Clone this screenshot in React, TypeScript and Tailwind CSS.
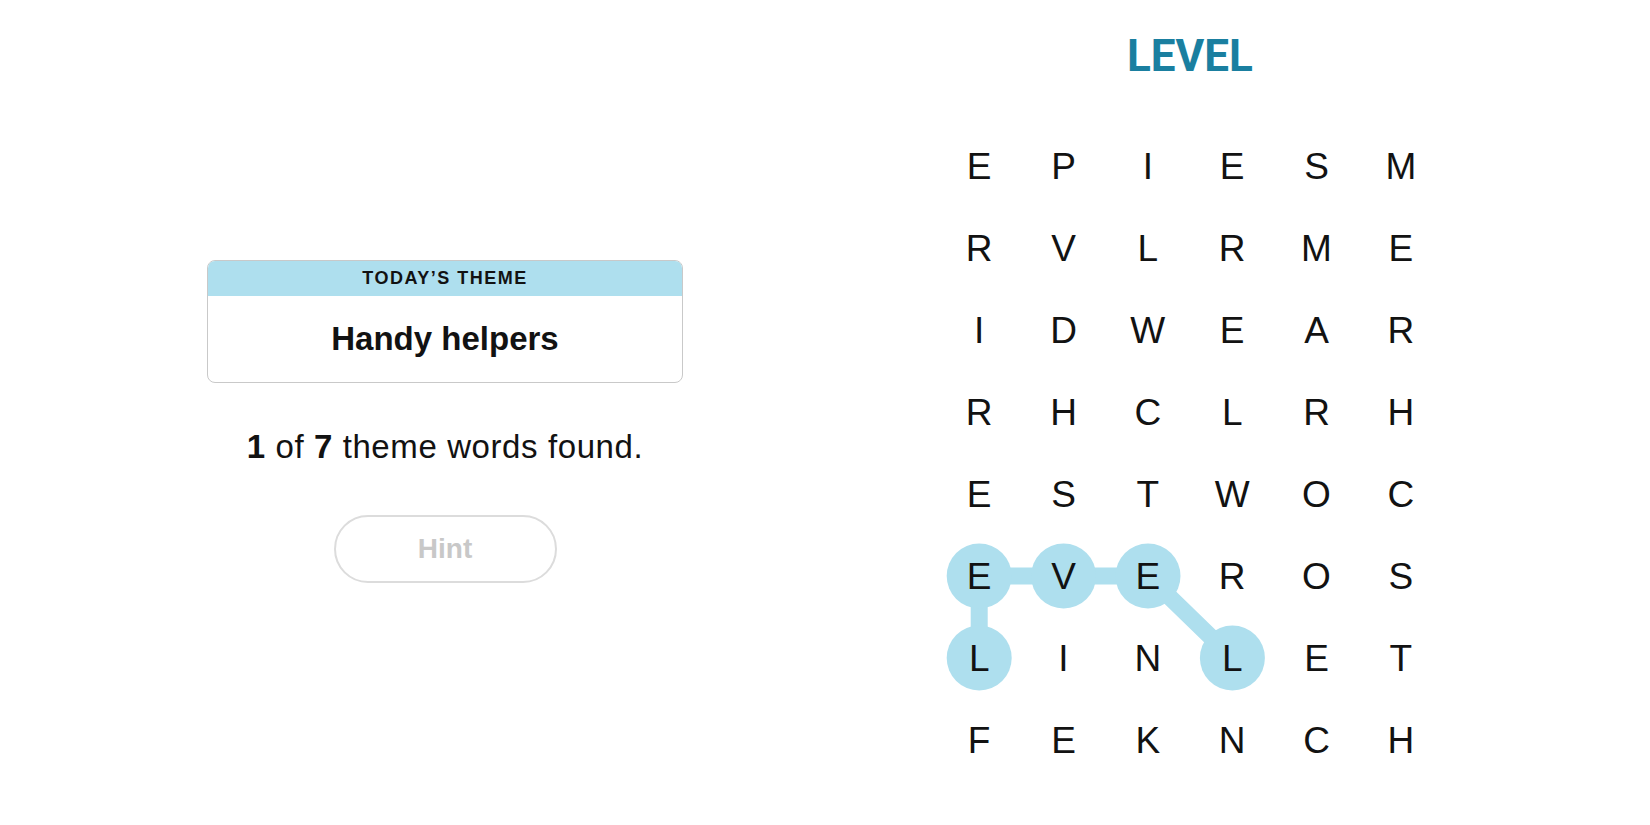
import React from "react";

const GRID = [
  "EPIESM",
  "RVLRME",
  "IDWEAR",
  "RHCLRH",
  "ESTWOC",
  "EVEROS",
  "LINLET",
  "FEKNCH",
];

const CW = 84.4;
const CH = 82;
const path: [number, number][] = [
  [0, 6],
  [0, 5],
  [1, 5],
  [2, 5],
  [3, 6],
];

function Board() {
  const pts = path.map(([c, r]) => `${CW / 2 + c * CW},${CH / 2 + r * CH}`).join(" ");
  return (
    <div className="relative w-[506px] h-[656px]">
      <svg className="absolute inset-0" width="506" height="656" viewBox="0 0 506 656">
        <polyline
          points={pts}
          fill="none"
          stroke="#aedfee"
          strokeWidth="17"
          strokeLinejoin="round"
        />
        {path.map(([c, r]) => (
          <circle key={`${c}-${r}`} cx={CW / 2 + c * CW} cy={CH / 2 + r * CH} r="32.5" fill="#aedfee" />
        ))}
      </svg>
      <div className="relative grid grid-cols-6">
        {GRID.map((row, r) =>
          row.split("").map((ch, c) => (
            <div
              key={`${c}-${r}`}
              className="h-[82px] flex items-center justify-center text-[37px] leading-none text-[#121212]"
            >
              {ch}
            </div>
          ))
        )}
      </div>
    </div>
  );
}

export default function App() {
  return (
    <div
      className="w-[1650px] h-[825px] bg-white flex justify-between px-[207px] overflow-hidden"
      style={{ fontFamily: '"Liberation Sans", Arial, sans-serif' }}
    >
      <div className="w-[476px] flex flex-col items-center pt-[260px]">
        <div className="w-full rounded-[8px] border border-[#c9c9c9] overflow-hidden">
          <div className="h-[35px] bg-[#aedfee] flex items-center justify-center text-[18px] font-bold tracking-[1.5px] text-[#121212]">
            TODAY’S THEME
          </div>
          <div className="h-[86px] flex items-center justify-center text-[33px] font-bold text-[#121212]">
            Handy helpers
          </div>
        </div>
        <div className="mt-[44px] h-[40px] flex items-center text-[33px] tracking-[0.6px] text-[#121212]">
          <span>
            <b>1</b> of <b>7</b> theme words found.
          </span>
        </div>
        <div className="mt-[48px] w-[223px] h-[68px] rounded-full border-2 border-[#dcdcdc] flex items-center justify-center text-[28px] font-bold text-[#c8c8c8]">
          Hint
        </div>
      </div>
      <div className="w-[506px] flex flex-col items-center pt-[20px]">
        <div className="h-[72px] flex items-center text-[44px] font-bold text-[#1a7fa0] font-['Roboto',sans-serif]">
          LEVEL
        </div>
        <div className="mt-[33px]">
          <Board />
        </div>
      </div>
    </div>
  );
}
